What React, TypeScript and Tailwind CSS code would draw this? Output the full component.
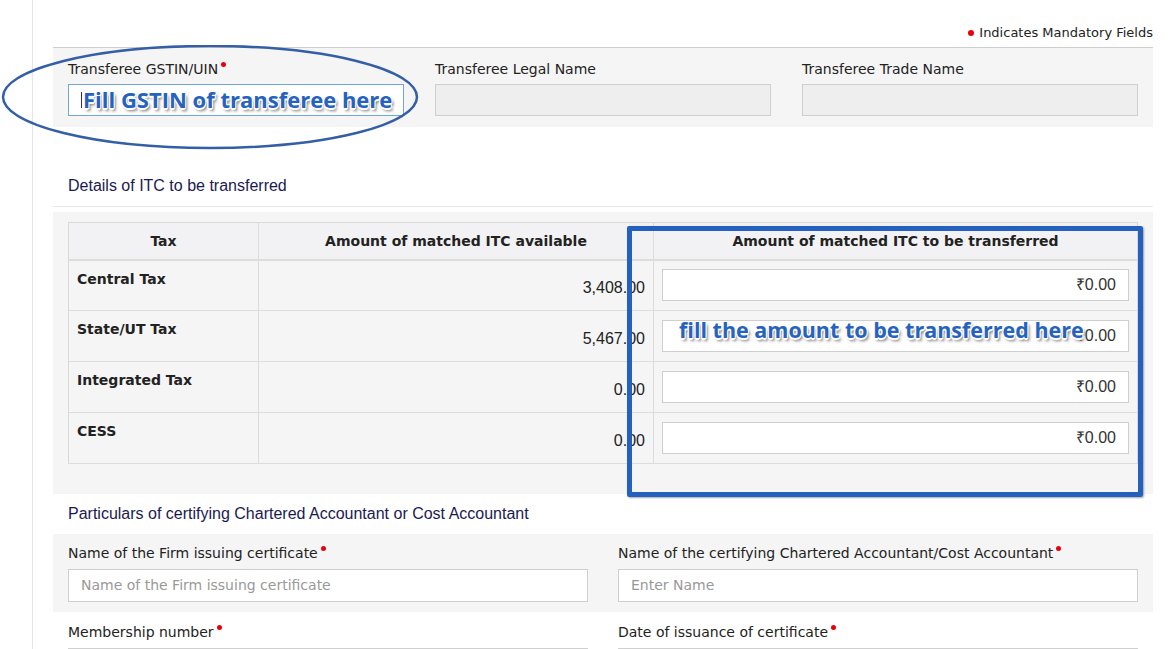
const verdana = "font-['DejaVu_Sans','Liberation_Sans',sans-serif]"
const helv = "font-['Liberation_Sans',Arial,sans-serif]"
const callout =
  "font-['Open_Sans','Noto_Sans',sans-serif] font-bold text-[#2563bf] [text-shadow:-1px_-1px_0_#fff,1px_-1px_0_#fff,-1px_1px_0_#fff,1px_1px_0_#fff,0_2px_0_#fff,2px_3px_3px_#777]"

function Req() {
  return <span className="ml-[3px] inline-block h-[5px] w-[5px] -translate-y-[7px] rounded-full bg-[#e8000b]" />
}

function Label({ text, required }: { text: string; required?: boolean }) {
  return (
    <div className={`${verdana} text-[14px] leading-[18px] text-[#222]`}>
      {text}
      {required && <Req />}
    </div>
  )
}

const rows = [
  { tax: 'Central Tax', available: '3,408.00' },
  { tax: 'State/UT Tax', available: '5,467.00' },
  { tax: 'Integrated Tax', available: '0.00' },
  { tax: 'CESS', available: '0.00' },
]

export default function App() {
  return (
    <div className="min-h-[649px] w-full bg-white pl-[32px]">
      <div className="relative min-h-[649px] border-l border-[#e3e6ea] pl-[20px] pr-[20px]">
        {/* mandatory legend */}
        <div className={`${verdana} flex h-[47px] items-end justify-end pb-[5px] text-[13px] text-[#222]`}>
          <span className="mr-[5px] inline-block h-[6px] w-[6px] -translate-y-[6px] rounded-full bg-[#e8000b]" />
          Indicates Mandatory Fields
        </div>

        {/* transferee */}
        <div className="relative border-t border-[#cfcfcf] bg-[#f5f5f5] px-[15px] pb-[11px] pt-[12px]">
          <div className="grid grid-cols-3 gap-x-[31px]">
            <div>
              <Label text="Transferee GSTIN/UIN" required />
              <div className="relative mt-[6px] flex h-[32px] items-center border border-[#6fa8dc] bg-white pl-[12px]">
                <span className="h-[16px] w-px bg-[#333]" />
                <span className={`${callout} absolute left-[14px] top-[-2px] whitespace-nowrap text-[22px] leading-[32px]`}>
                  Fill GSTIN of transferee here
                </span>
              </div>
            </div>
            <div>
              <Label text="Transferee Legal Name" />
              <div className="mt-[6px] h-[32px] border border-[#cfcfcf] bg-[#eeeeee]" />
            </div>
            <div>
              <Label text="Transferee Trade Name" />
              <div className="mt-[6px] h-[32px] border border-[#cfcfcf] bg-[#eeeeee]" />
            </div>
          </div>
          <svg className="pointer-events-none absolute left-[-52px] top-[-3px]" width="420" height="106" viewBox="0 0 420 106">
            <ellipse cx="209" cy="52" rx="207" ry="51" fill="none" stroke="#345fa6" strokeWidth="2.5" />
          </svg>
        </div>

        {/* ITC details */}
        <div className={`${helv} border-b border-[#e8e8e8] px-[15px] pb-[10px] pt-[49px] text-[16px] leading-[20px] text-[#1a1a52]`}>
          Details of ITC to be transferred
        </div>
        <div className="relative mt-[5px] bg-[#f5f5f5] px-[15px] pb-[30px] pt-[10px]">
          <table className="w-full table-fixed border-collapse border border-[#d9d9d9]">
            <colgroup>
              <col className="w-[190px]" />
              <col className="w-[395px]" />
              <col />
            </colgroup>
            <thead>
              <tr className={`${verdana} h-[37px] border-b-2 border-[#dcdcdc] bg-[#f2f2f4] text-[14px] font-bold leading-[18px] text-[#222]`}>
                <th className="border-r border-[#dcdcdc] p-0">Tax</th>
                <th className="border-r border-[#dcdcdc] p-0">Amount of matched ITC available</th>
                <th className="p-0">Amount of matched ITC to be transferred</th>
              </tr>
            </thead>
            <tbody>
              {rows.map((r) => (
                <tr key={r.tax} className="h-[51px] border-b border-[#dcdcdc]">
                  <td className={`${verdana} border-r border-[#dcdcdc] px-[8px] pb-[20px] pt-[9px] align-top text-[14px] font-bold leading-[18px] text-[#222]`}>
                    {r.tax}
                  </td>
                  <td className={`${helv} border-r border-[#dcdcdc] px-[8px] pt-[6px] text-right text-[16px] text-[#222]`}>
                    {r.available}
                  </td>
                  <td className="px-[8px]">
                    <div className={`${helv} flex h-[32px] items-center justify-end border border-[#cfcfcf] bg-white pr-[12px] text-[16px] text-[#333]`}>
                      ₹0.00
                    </div>
                  </td>
                </tr>
              ))}
            </tbody>
          </table>
          <div className="pointer-events-none absolute left-[574px] top-[14px] h-[271px] w-[516px] rounded-[2px] border-[5px] border-[#2461bf] shadow-[1px_1px_2px_rgba(0,0,0,0.35)]" />
          <span className={`${callout} pointer-events-none absolute left-[626px] top-[102px] whitespace-nowrap text-[21.5px] leading-[32px]`}>
            fill the amount to be transferred here
          </span>
        </div>

        {/* CA particulars */}
        <div className={`${helv} px-[15px] pb-[10px] pt-[10px] text-[16px] leading-[20px] text-[#1a1a52]`}>
          Particulars of certifying Chartered Accountant or Cost Accountant
        </div>
        <div className="grid grid-cols-2 gap-x-[30px] bg-[#f5f5f5] px-[15px] pb-[10px] pt-[10px]">
          <div>
            <Label text="Name of the Firm issuing certificate" required />
            <div className={`${verdana} mt-[7px] flex h-[33px] items-center border border-[#cfcfcf] bg-white px-[12px] text-[14px] text-[#999]`}>
              Name of the Firm issuing certificate
            </div>
          </div>
          <div>
            <Label text="Name of the certifying Chartered Accountant/Cost Accountant" required />
            <div className={`${verdana} mt-[7px] flex h-[33px] items-center border border-[#cfcfcf] bg-white px-[12px] text-[14px] text-[#999]`}>
              Enter Name
            </div>
          </div>
        </div>
        <div className="grid grid-cols-2 gap-x-[30px] px-[15px] pt-[11px]">
          <div>
            <Label text="Membership number" required />
            <div className="mt-[7px] h-[33px] border border-[#cfcfcf] bg-white" />
          </div>
          <div>
            <Label text="Date of issuance of certificate" required />
            <div className="mt-[7px] h-[33px] border border-[#cfcfcf] bg-white" />
          </div>
        </div>
      </div>
    </div>
  )
}
